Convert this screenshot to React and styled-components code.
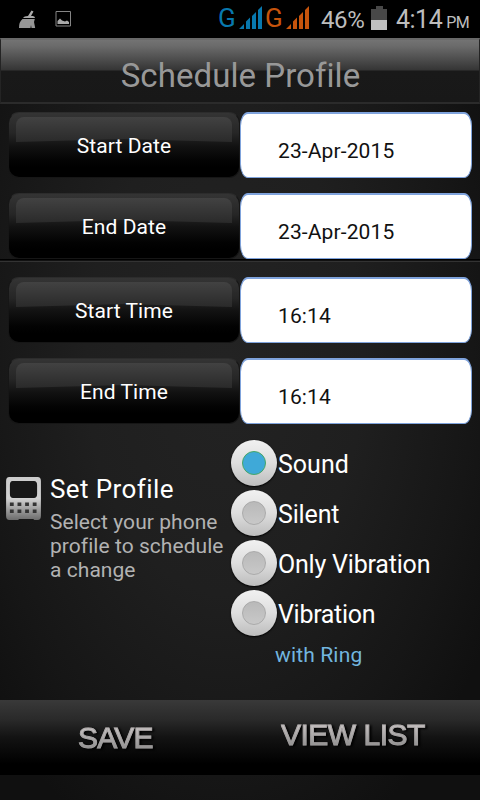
import React, { useState } from 'react'
import styled, { createGlobalStyle } from 'styled-components'

const GlobalStyle = createGlobalStyle`
  * {
    box-sizing: border-box;
  }

  body {
    margin: 0;
    background: #000;
    font-family: Roboto, sans-serif;
  }
`

const Screen = styled.div`
  width: 480px;
  height: 800px;
  display: flex;
  flex-direction: column;
  overflow: hidden;
  background: radial-gradient(ellipse 310px 520px at 225px 360px, #232323 0%, #1f1f1f 45%, #161616 80%, #101010 100%);
`

const StatusBar = styled.header`
  height: 38px;
  flex: none;
  display: flex;
  align-items: flex-start;
  background: #000;
  color: #bdbdbd;
`

const Notifications = styled.div`
  width: 218px;
  padding: 10px 0 0 18px;
  display: flex;
  gap: 18px;
`

const Network = styled.div`
  width: 47px;
  display: flex;
  align-items: flex-start;
  color: ${({ $color }) => $color};
  font-size: 26px;
  line-height: 36px;

  span {
    width: 21px;
  }

  svg {
    margin-top: 6px;
  }
`

const Battery = styled.div`
  display: flex;
  padding-left: 9px;
  font-size: 24px;
  line-height: 40px;
  letter-spacing: -0.4px;

  span {
    width: 50px;
  }

  svg {
    margin-top: 6px;
  }
`

const Clock = styled.div`
  margin-left: 9px;
  font-size: 25px;
  line-height: 40px;
  letter-spacing: -0.5px;
  white-space: nowrap;

  small {
    margin-left: 4px;
    font-size: 16px;
  }
`

const TitleBar = styled.h1`
  height: 66px;
  flex: none;
  margin: 0;
  padding-left: 1px;
  text-align: center;
  border: 1px solid #242424;
  border-top: 2px solid #686868;
  border-bottom: 2px solid #2b2b2b;
  background: linear-gradient(#737373 0, #6b6b6b 6px, #353535 30px, #191919 31px, #181818 100%);
  color: #989898;
  font-size: 33px;
  font-weight: 400;
  line-height: 72px;
  letter-spacing: 0.06px;
`

const FieldGroup = styled.section`
  flex: none;
  display: flex;
  flex-direction: column;
  gap: 15px;
  padding: ${({ $top }) => $top}px 8px 0;
`

const Divider = styled.div`
  height: 3px;
  flex: none;
  border-top: 1px solid #000;
  border-bottom: 1px solid #333;
  background: #111;
`

const Field = styled.div`
  display: grid;
  grid-template-columns: 232px 232px;
  height: 66px;
`

const FieldButton = styled.button`
  display: grid;
  grid-template-columns: 1fr;
  padding: 4px 7px;
  border: 1px solid #161616;
  border-top-color: #2c2c2c;
  border-radius: 11px;
  background: linear-gradient(#343434 0, #262626 20px, #121212 33px, #030303 48px, #000 55px);
  color: #fff;
  font: 21px Roboto, sans-serif;
`

const Gloss = styled.span`
  grid-area: 1 / 1;
  height: 25px;
  border-radius: 8px 8px 0 0;
  background: linear-gradient(#424242, #2a2a2a);
  clip-path: polygon(0 0, 100% 0, 100% 100%, 50% 88%, 0 100%);
`

const FieldLabel = styled.span`
  grid-area: 1 / 1;
  align-self: center;
  z-index: 1;
  padding-top: 1px;
  letter-spacing: 0.08px;
`

const FieldValue = styled.div`
  padding: 12px 0 0 37px;
  border: 1px solid #7fa3dc;
  border-top-width: 2px;
  border-radius: 8px / 14px;
  background: #fff;
  color: #111;
  font-size: 21px;
  line-height: 50px;
  letter-spacing: 0.12px;
`

const ProfileSection = styled.section`
  height: 276px;
  flex: none;
  display: flex;
`

const ProfileInfo = styled.div`
  width: 231px;
  display: flex;
  gap: 8px;
  padding: 52px 0 0 5px;

  svg {
    flex: none;
    margin-top: 1px;
  }
`

const ProfileTitle = styled.h2`
  margin: -3px 0 5px;
  color: #fff;
  font-size: 26px;
  font-weight: 400;
  line-height: 32px;
  letter-spacing: 0.4px;
`

const ProfileHint = styled.p`
  margin: 0;
  color: #b2b2b2;
  font-size: 21px;
  line-height: 24px;
  letter-spacing: 0.05px;
  white-space: nowrap;
`

const RadioList = styled.div`
  padding-top: 14px;
`

const Option = styled.div`
  height: 50px;
  display: flex;
  align-items: center;
  gap: 1px;
  color: #fff;
  font-size: 25px;
  letter-spacing: ${({ $spacing }) => $spacing}px;
  cursor: pointer;

  span {
    padding-top: 3px;
  }
`

const Radio = styled.i`
  width: 46px;
  height: 46px;
  display: grid;
  place-items: center;
  border-radius: 50%;
  background: linear-gradient(#f1f1f1, #dedede 50%, #bdbdbd);
  box-shadow: 0 1px 2px #000;

  &::after {
    content: '';
    width: 22px;
    height: 22px;
    border-radius: 50%;
    border: 1px solid ${({ $on }) => ($on ? '#48a765' : '#aaa')};
    background: ${({ $on }) => ($on ? '#3fa9d8' : 'linear-gradient(#b9b9b9, #c8c8c8)')};
  }
`

const RingNote = styled.div`
  padding-left: 44px;
  color: #72b5df;
  font-size: 21px;
  line-height: 34px;
  letter-spacing: 0.15px;
`

const Footer = styled.footer`
  height: 75px;
  flex: none;
  display: grid;
  grid-template-columns: 228px 252px;
`

const FooterButton = styled.button`
  padding: ${({ $pad }) => $pad};
  border: 0;
  background: linear-gradient(#393939, #292929 20px, #131313 37px, #000 64px);
  text-align: left;
`

const FooterText = styled.span`
  display: block;
  font: 30px 'Liberation Sans', sans-serif;
  line-height: 36px;
  letter-spacing: ${({ $spacing }) => $spacing}px;
  color: transparent;
  background: linear-gradient(#c9c4c4 20%, #8d8d8d 85%);
  background-clip: text;
  -webkit-text-stroke: 1px rgba(160, 156, 156, 0.55);
  filter: drop-shadow(2px 1px 1px #000);
`

function Signal({ color }) {
  return (
    <svg width="25" height="24" fill={color}>
      <path d="M0 23l5-5v5zM7 15.500l4-4V23H7zM13 10l4-4v17h-4zM19 4l4-4v23h-4z" />
    </svg>
  )
}

function Broom() {
  return (
    <svg width="19" height="19" viewBox="0 0 19 19">
      <path d="M10 6l3.500-5.600 2 1L13 6h2q2 .5 2 2H5q1-2 5-2z" fill="#aaa" />
      <path d="M4.500 9h12.300l-.8 3 1.200 6h-3.700l-.5-3-.5 3H1q-.2-6 3.500-9z" fill="#969696" />
    </svg>
  )
}

function Picture() {
  return (
    <svg width="17" height="18" viewBox="0 0 17 18">
      <path d="M1 1.500h14.500v14.500H1z" fill="none" stroke="#858585" />
      <path d="M2.500 14v-3L5 8.500l2 2 3 1 2-1 2 1.500v2z" fill="#aaa" />
    </svg>
  )
}

function Phone() {
  return (
    <svg width="37" height="45" viewBox="1 1 34 45" preserveAspectRatio="none">
      <defs>
        <linearGradient id="metal" x2="0" y2="1">
          <stop stopColor="#ccc" />
          <stop offset=".5" stopColor="#d2d2d2" />
          <stop offset="1" stopColor="#6c6c6c" />
        </linearGradient>
      </defs>
      <path
        fillRule="evenodd"
        d="M5 1h26q3 0 3 4v35q0 4-3 4h-3l-1-1H14l-1 1H5q-3 0-3-4V5q0-4 3-4zM8 5Q5.500 5 5.500 9v9q0 4 3 4h19q3 0 3-4V9q0-4-3-4z"
        fill="url(#metal)"
      />
      <path d="M8.500 5.500h19q2.500 0 2.500 4v8q0 4-3 4H9q-3 0-3-4v-8q0-4 2.500-4z" fill="#181818" />
      {[26.5, 33.5].map((y) => (
        <path key={y} d={`M5.500 ${y}h3.500v3.500h-3.500zM12.500 ${y}h3.500v3.500h-3.500zM19.500 ${y}h3.500v3.500h-3.500zM26.500 ${y}h3.500v3.500h-3.500z`} fill="#343434" />
      ))}
    </svg>
  )
}

const dates = [
  { label: 'Start Date', value: '23-Apr-2015' },
  { label: 'End Date', value: '23-Apr-2015' },
]

const times = [
  { label: 'Start Time', value: '16:14' },
  { label: 'End Time', value: '16:14' },
]

const profiles = [
  { name: 'Sound', spacing: 0 },
  { name: 'Silent', spacing: -0.15 },
  { name: 'Only Vibration', spacing: -0.2 },
  { name: 'Vibration', spacing: -0.3 },
]

function Fields({ items, top }) {
  return (
    <FieldGroup $top={top}>
      {items.map(({ label, value }) => (
        <Field key={label}>
          <FieldButton>
            <Gloss />
            <FieldLabel>{label}</FieldLabel>
          </FieldButton>
          <FieldValue>{value}</FieldValue>
        </Field>
      ))}
    </FieldGroup>
  )
}

function App() {
  const [profile, setProfile] = useState('Sound')

  return (
    <Screen>
      <GlobalStyle />
      <StatusBar>
        <Notifications>
          <Broom />
          <Picture />
        </Notifications>
        <Network $color="#0878ae">
          <span>G</span>
          <Signal color="#0878ae" />
        </Network>
        <Network $color="#c6540c">
          <span>G</span>
          <Signal color="#c6540c" />
        </Network>
        <Battery>
          <span>46%</span>
          <svg width="16" height="24">
            <path d="M5 0h7v3h4v11H0V3h5z" fill="#484848" />
            <path d="M0 14h16v10H0z" fill="#bfbfbf" />
          </svg>
        </Battery>
        <Clock>
          4:14<small>PM</small>
        </Clock>
      </StatusBar>
      <TitleBar>Schedule Profile</TitleBar>
      <Fields items={dates} top={8} />
      <Divider />
      <Fields items={times} top={15} />
      <ProfileSection>
        <ProfileInfo>
          <Phone />
          <div>
            <ProfileTitle>Set Profile</ProfileTitle>
            <ProfileHint>
              Select your phone
              <br />
              profile to schedule
              <br />a change
            </ProfileHint>
          </div>
        </ProfileInfo>
        <RadioList>
          {profiles.map(({ name, spacing }) => (
            <Option key={name} $spacing={spacing} onClick={() => setProfile(name)}>
              <Radio $on={name === profile} />
              <span>{name}</span>
            </Option>
          ))}
          <RingNote>with Ring</RingNote>
        </RadioList>
      </ProfileSection>
      <Footer>
        <FooterButton $pad="1px 0 0 78px">
          <FooterText $spacing={-0.8}>SAVE</FooterText>
        </FooterButton>
        <FooterButton $pad="0 0 5px 53px">
          <FooterText $spacing={-0.5}>VIEW LIST</FooterText>
        </FooterButton>
      </Footer>
    </Screen>
  )
}

export default App
